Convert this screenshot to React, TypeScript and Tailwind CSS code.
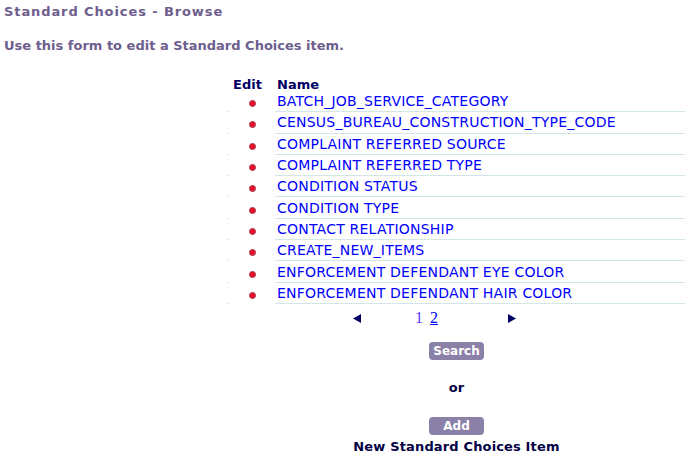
import React from "react";

const items = [
  "BATCH_JOB_SERVICE_CATEGORY",
  "CENSUS_BUREAU_CONSTRUCTION_TYPE_CODE",
  "COMPLAINT REFERRED SOURCE",
  "COMPLAINT REFERRED TYPE",
  "CONDITION STATUS",
  "CONDITION TYPE",
  "CONTACT RELATIONSHIP",
  "CREATE_NEW_ITEMS",
  "ENFORCEMENT DEFENDANT EYE COLOR",
  "ENFORCEMENT DEFENDANT HAIR COLOR",
];

export default function App() {
  return (
    <div className="w-[694px] h-[468px] bg-white overflow-hidden text-[13px]" style={{ fontFamily: "'DejaVu Sans', Verdana, sans-serif" }}>
      {/* Page heading */}
      <div className="pl-[4px] pt-[4px] font-bold text-[#6e5e8e]">
        <div className="leading-[16px] tracking-[0.9px]">Standard Choices - Browse</div>
        <div className="leading-[16px] mt-[18px]">Use this form to edit a Standard Choices item.</div>
      </div>

      <div className="ml-[228px] w-[457px] mt-[25px]">
        {/* Table header */}
        <div className="flex h-[12px] items-center font-bold text-[#000066]">
          <div className="w-[47px] pl-[5px]">Edit</div>
          <div className="pl-[2px]">Name</div>
        </div>

        {/* Rows */}
        {items.map((name) => (
          <div key={name} className="flex h-[21.3px]">
            <div className="w-[47px] relative flex items-center justify-center pl-[1px]">
              <span className="w-[7px] h-[7px] rounded-full bg-[#ee1028] border border-[#a03848] mt-[4px]"></span>
              <span className="absolute left-0 bottom-0 w-[1px] h-[1px] bg-[#c8dc90]"></span>
            </div>
            <div className="flex-1 border-b border-[#d2e8e8] pl-[2px] flex items-center">
              <a className="text-[#0000ff] text-[14px] tracking-[0.22px] leading-[16px] cursor-pointer">{name}</a>
            </div>
          </div>
        ))}

        {/* Pager */}
        <div className="relative h-[30px]">
          <svg className="absolute left-[125px] top-[10px]" width="8" height="9" viewBox="0 0 8 9">
            <polygon points="8,0 8,9 0,4.5" fill="#000066" />
          </svg>
          <div className="absolute left-[187px] top-[5px] flex gap-[7px] text-[16px] leading-[18px]" style={{ fontFamily: "'Liberation Serif', 'Times New Roman', serif" }}>
            <span className="text-[#5a3cff]">1</span>
            <span className="text-[#0000ff] underline">2</span>
          </div>
          <svg className="absolute left-[280px] top-[10px]" width="8" height="9" viewBox="0 0 8 9">
            <polygon points="0,0 0,9 8,4.5" fill="#000066" />
          </svg>
        </div>

        {/* Actions */}
        <div className="flex flex-col items-center">
          <button className="mt-[8px] w-[55px] h-[18px] rounded-[4px] bg-[#8a80a8] text-white font-bold text-[12px] leading-[18px]">Search</button>
          <div className="mt-[20px] font-bold text-[#000044] leading-[16px]">or</div>
          <button className="mt-[21px] w-[55px] h-[18px] rounded-[4px] bg-[#8a80a8] text-white font-bold text-[12px] leading-[18px]">Add</button>
          <div className="mt-[4px] font-bold text-[#000044] leading-[16px] tracking-[0.15px]">New Standard Choices Item</div>
        </div>
      </div>
    </div>
  );
}
